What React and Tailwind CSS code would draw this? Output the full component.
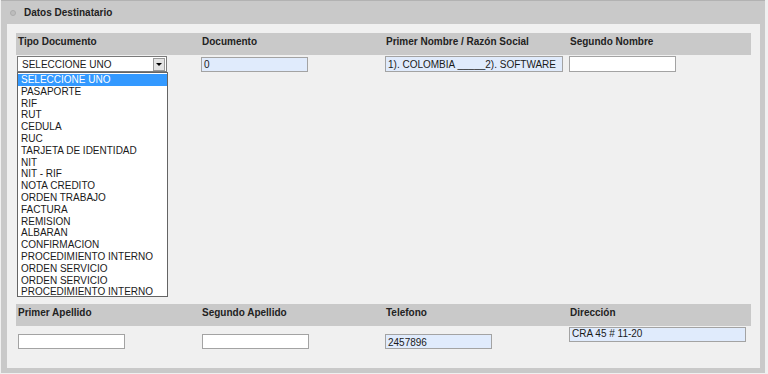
import React from 'react';

const opciones = [
  'SELECCIONE UNO',
  'PASAPORTE',
  'RIF',
  'RUT',
  'CEDULA',
  'RUC',
  'TARJETA DE IDENTIDAD',
  'NIT',
  'NIT - RIF',
  'NOTA CREDITO',
  'ORDEN TRABAJO',
  'FACTURA',
  'REMISION',
  'ALBARAN',
  'CONFIRMACION',
  'PROCEDIMIENTO INTERNO',
  'ORDEN SERVICIO',
  'ORDEN SERVICIO',
  'PROCEDIMIENTO INTERNO',
];

// caja de texto estilo formulario viejo
function Campo({ value = '', blue = false, w = 'w-[107px]', align = 'items-center', className = '' }) {
  return (
    <div
      className={`flex ${align} h-[15px] ${w} border border-[#a3a3a3] pl-[2px] text-[10px] leading-[11px] text-[#1a1a1a] whitespace-nowrap overflow-hidden ${
        blue ? 'bg-[#e0ebfc]' : 'bg-white'
      } ${className}`}
    >
      {value}
    </div>
  );
}

function Cabecera({ labels }) {
  return (
    <div className="grid grid-cols-[184px_184px_184px_183px] h-[22px] bg-[#c9c9c9]">
      {labels.map((l) => (
        <div key={l} className="pl-[2px] pt-[3px] text-[10px] font-bold leading-[12px] text-[#222]">
          {l}
        </div>
      ))}
    </div>
  );
}

export default function App() {
  return (
    <div className="w-[768px] h-[374px] bg-[#f0f0f0] font-['Liberation_Sans',Arial,sans-serif]">
      <div className="ml-[1px] w-[764px] bg-[#c9c9c9] border-t border-[#b2b2b2] pb-[5px]">
        {/* titulo */}
        <div className="flex items-center h-[23px] pl-[9px]">
          <div className="w-[6px] h-[6px] rounded-full bg-[#bdbdbd] border border-[#acacac]" />
          <span className="ml-[8px] text-[10px] font-bold text-[#222]">Datos Destinatario</span>
        </div>

        <div className="ml-[6px] mr-[5px] bg-[#f0f0f0] px-[9px] pt-[9px]">
          <Cabecera labels={['Tipo Documento', 'Documento', 'Primer Nombre / Razón Social', 'Segundo Nombre']} />

          {/* fila 1 */}
          <div className="grid grid-cols-[184px_184px_184px_183px] h-[249px] items-start">
            <div className="pl-[1px] pt-[1px]">
              <div className="flex items-center h-[16px] w-[150px] border border-[#7a7a7a] bg-white">
                <span className="flex-1 pl-[4px] text-[10px] leading-[11px] text-[#1a1a1a]">SELECCIONE UNO</span>
                <div className="flex items-center justify-center w-[12px] h-[13px] mr-[1px] bg-[#e3e3e3] border border-[#9a9a9a]">
                  <div className="w-0 h-0 border-l-[3px] border-r-[3px] border-t-[3px] border-l-transparent border-r-transparent border-t-black" />
                </div>
              </div>
              <div className="w-[151px] h-[225px] border border-[#646464] bg-white pt-[1px]">
                {opciones.map((o, i) => (
                  <div
                    key={i}
                    className={`h-[11.8px] pl-[3px] text-[10px] leading-[11.8px] whitespace-nowrap ${
                      i === 0 ? 'bg-[#3399ff] text-white' : 'text-[#1a1a1a]'
                    }`}
                  >
                    {o}
                  </div>
                ))}
              </div>
            </div>
            <div className="pl-[1px] pt-[2px]">
              <Campo value="0" blue w="w-[107px]" />
            </div>
            <div className="pl-[1px] pt-[1px]">
              <Campo value="1). COLOMBIA _____2). SOFTWARE" blue w="w-[178px]" className="h-[16px]" />
            </div>
            <div className="pl-[1px] pt-[1px]">
              <Campo w="w-[107px]" className="h-[16px]" />
            </div>
          </div>

          <Cabecera labels={['Primer Apellido', 'Segundo Apellido', 'Telefono', 'Dirección']} />

          {/* fila 2 */}
          <div className="grid grid-cols-[184px_184px_184px_183px] h-[42px] items-start">
            <div className="pl-[2px] pt-[8px]">
              <Campo w="w-[107px]" />
            </div>
            <div className="pl-[2px] pt-[8px]">
              <Campo w="w-[107px]" />
            </div>
            <div className="pl-[1px] pt-[8px]">
              <Campo value="2457896" blue w="w-[107px]" align="items-end" />
            </div>
            <div className="pl-[1px] pt-[1px]">
              <Campo value="CRA 45 # 11-20" blue w="w-[177px]" align="items-start" />
            </div>
          </div>
        </div>
      </div>
    </div>
  );
}
